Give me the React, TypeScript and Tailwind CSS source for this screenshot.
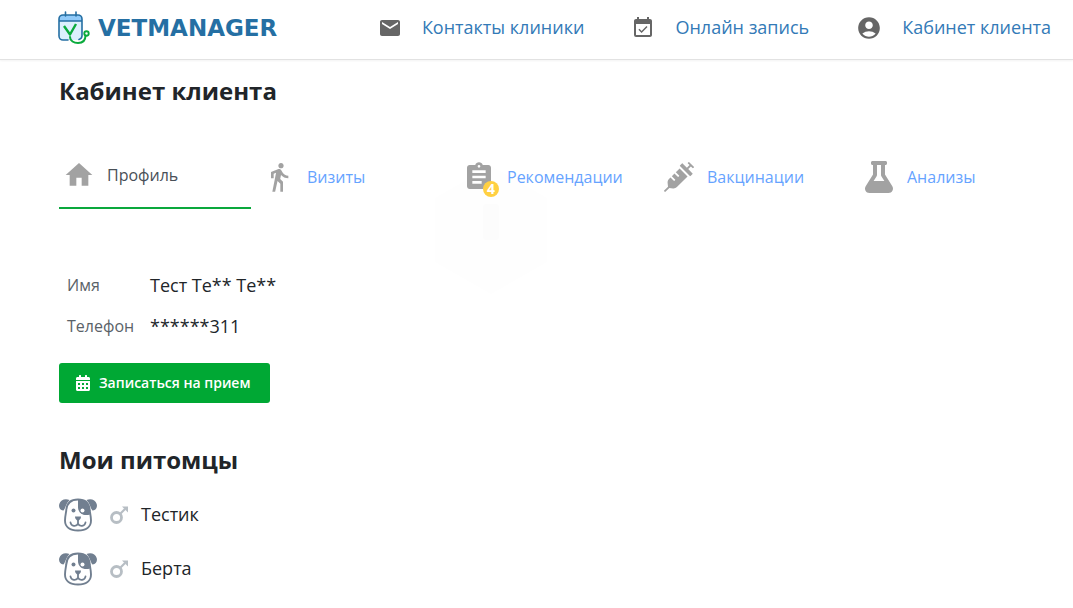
import type { ReactNode } from "react";
import {
  MdAccountCircle,
  MdAssignment,
  MdDirectionsWalk,
  MdEmail,
  MdEventAvailable,
  MdHome,
} from "react-icons/md";
import { FaCalendarAlt, FaFlask, FaSyringe } from "react-icons/fa";

function LogoMark() {
  return (
    <svg className="h-9 w-8" viewBox="0 0 32 36" fill="none" aria-hidden="true">
      <rect x="1" y="5" width="23" height="25" rx="4" fill="#dcf0fd" />
      <path d="M1 11V9a4 4 0 0 1 4-4h15a4 4 0 0 1 4 4v2z" fill="#90caf9" />
      <path
        d="M10 30H5a4 4 0 0 1-4-4V9a4 4 0 0 1 4-4h15a4 4 0 0 1 4 4v17a4 4 0 0 1-3 3.500M1 11h23M7.500 2v4M18 2v4"
        stroke="#256fa3"
        strokeWidth="1.600"
        strokeLinecap="round"
      />
      <path d="M6 16l6 8.500L18 14" stroke="#0aaa3c" strokeWidth="2.400" strokeLinejoin="round" />
      <path
        d="M12 27c0 4 4 6 8 6 5 0 7.500-3 7.500-7.500"
        stroke="#0aaa3c"
        strokeWidth="2"
        strokeLinecap="round"
      />
      <circle cx="28.500" cy="23.500" r="2.200" stroke="#0aaa3c" strokeWidth="1.900" />
    </svg>
  );
}

function DogIcon() {
  return (
    <svg className="h-9 w-[38px] text-[#717f90]" viewBox="0 -2 38 36" fill="none" aria-hidden="true">
      <path d="M10.500 2C6 0 1.500 2 .3 6c-1 3.500 1 6.500 4 6.500 2-1 2.200-6.500 6.200-10.500z" fill="currentColor" />
      <path d="M27.500 2c4.500-2 9 0 10.200 4 1 3.500-1 6.500-4 6.500-2-1-2.200-6.500-6.200-10.500z" fill="currentColor" />
      <path
        d="M19 1.500C11 1.500 7.500 5.500 7.200 13 6.500 17 6 19.500 6 22.500c0 6.500 5 10 13 10s13-3.500 13-10c0-3-.5-5.500-1.200-9.500C30.500 5.500 27 1.500 19 1.500z"
        stroke="currentColor"
        strokeWidth="1.900"
      />
      <path d="M19 1.500c8 0 11.500 4 12 15-6 2-12-1-12-7.500z" fill="currentColor" />
      <circle cx="14.500" cy="12.500" r="2" fill="currentColor" />
      <circle cx="23.500" cy="12.500" r="2" fill="white" />
      <path d="M16 18.500h6c0 2.500-1.500 3.700-3 4.200-1.500-.5-3-1.700-3-4.200z" fill="currentColor" />
      <path
        d="M19 22v3.500M11.500 24.500c.5 4 6 4.500 7.500 1.200 1.500 3.300 7 2.800 7.500-1.200"
        stroke="currentColor"
        strokeWidth="1.800"
        strokeLinecap="round"
      />
    </svg>
  );
}

function MaleIcon() {
  return (
    <svg className="h-5 w-[18px] text-[#b7bec4]" viewBox="0 -2 18 20" fill="none" role="img" aria-label="Самец">
      <circle cx="6.500" cy="11.500" r="5" stroke="currentColor" strokeWidth="2.800" />
      <path d="M10 8l5-5" stroke="currentColor" strokeWidth="2.200" />
      <path d="M12 .5h6v6z" fill="currentColor" />
    </svg>
  );
}

function Watermark() {
  return (
    <svg
      className="pointer-events-none absolute top-[22px] left-[376px] -z-10 h-32 w-28"
      viewBox="0 0 112 128"
      aria-hidden="true"
    >
      <path d="M56 0l56 32v64l-56 32L0 96V32z" fill="#fefefe" />
      <rect x="48" y="38" width="16" height="36" rx="4" fill="#fcfcfc" />
    </svg>
  );
}

const navLinks = [
  { label: "Контакты клиники", icon: <MdEmail className="size-6" /> },
  { label: "Онлайн запись", icon: <MdEventAvailable className="size-6" /> },
  { label: "Кабинет клиента", icon: <MdAccountCircle className="size-[26px]" /> },
];

type Tab = { label: string; icon: ReactNode; active?: boolean; badge?: number };

const tabs: Tab[] = [
  { label: "Профиль", icon: <MdHome className="size-8" />, active: true },
  { label: "Визиты", icon: <MdDirectionsWalk className="size-8" /> },
  { label: "Рекомендации", icon: <MdAssignment className="size-8" />, badge: 4 },
  { label: "Вакцинации", icon: <FaSyringe className="size-[30px]" /> },
  { label: "Анализы", icon: <FaFlask className="size-8" /> },
];

const profile = [
  { label: "Имя", value: "Тест Те** Те**" },
  { label: "Телефон", value: "******311" },
];

const pets = ["Тестик", "Берта"];

export default function App() {
  return (
    <div className="min-h-screen bg-white font-['Open_Sans','Noto_Sans',sans-serif] text-[#212529]">
      <header className="flex h-[60px] items-center justify-between border-b border-[#e2e2e2] pr-[22px] pb-1 pl-[58px] shadow-xs">
        <a href="#" className="flex items-center gap-2" aria-label="Vetmanager">
          <LogoMark />
          <span className="font-['DejaVu_Sans',sans-serif] text-[23px] leading-8 font-bold text-[#256fa3]">
            VETMANAGER
          </span>
        </a>
        <nav className="flex items-center gap-[47px]">
          {navLinks.map((link) => (
            <a key={link.label} href="#" className="flex items-center gap-5 text-lg text-[#337ab7]">
              <span className="text-[#666]">{link.icon}</span>
              <span className="pb-0.5">{link.label}</span>
            </a>
          ))}
        </nav>
      </header>

      <main className="px-[59px] pt-[15px]">
        <h1 className="text-2xl leading-8 font-bold">Кабинет клиента</h1>

        <div className="relative isolate mt-[37px]">
          <Watermark />
          <nav className="flex gap-2">
            {tabs.map((tab) => (
              <a
                key={tab.label}
                href="#"
                aria-current={tab.active ? "page" : undefined}
                className={
                  tab.active
                    ? "flex h-[65px] w-48 shrink-0 items-center gap-2 border-b-2 border-[#0aa83c] pb-0.5 text-base text-[#495057]"
                    : "flex h-[65px] w-48 shrink-0 items-center gap-2 text-base text-[#66a3ff]"
                }
              >
                <span className="relative flex w-10 justify-center text-[#a2a2a2]">
                  {tab.icon}
                  {tab.badge && (
                    <span className="absolute right-0 -bottom-1 flex size-4 items-center justify-center rounded-full bg-[#ffd042] text-sm font-bold text-white">
                      {tab.badge}
                    </span>
                  )}
                </span>
                {tab.label}
              </a>
            ))}
          </nav>
        </div>

        <dl className="mt-[55px] grid grid-cols-[75px_1fr] gap-x-2 pl-2">
          {profile.map((row) => (
            <div key={row.label} className="col-span-2 grid h-[41px] grid-cols-subgrid items-center">
              <dt className="text-base text-[#5a6268]">{row.label}</dt>
              <dd className="text-lg">{row.value}</dd>
            </div>
          ))}
        </dl>

        <button
          type="button"
          className="mt-[17px] flex h-10 items-center gap-2 rounded-[3px] bg-[#00a834] pr-5 pl-4 text-sm font-semibold text-white"
        >
          <FaCalendarAlt className="size-4" />
          Записаться на прием
        </button>

        <h2 className="mt-[41px] text-2xl leading-8 font-bold">Мои питомцы</h2>
        <ul className="mt-3">
          {pets.map((pet) => (
            <li key={pet} className="flex h-[54px] items-center gap-[13px] pb-0.5 text-lg">
              <DogIcon />
              <MaleIcon />
              {pet}
            </li>
          ))}
        </ul>
      </main>
    </div>
  );
}
